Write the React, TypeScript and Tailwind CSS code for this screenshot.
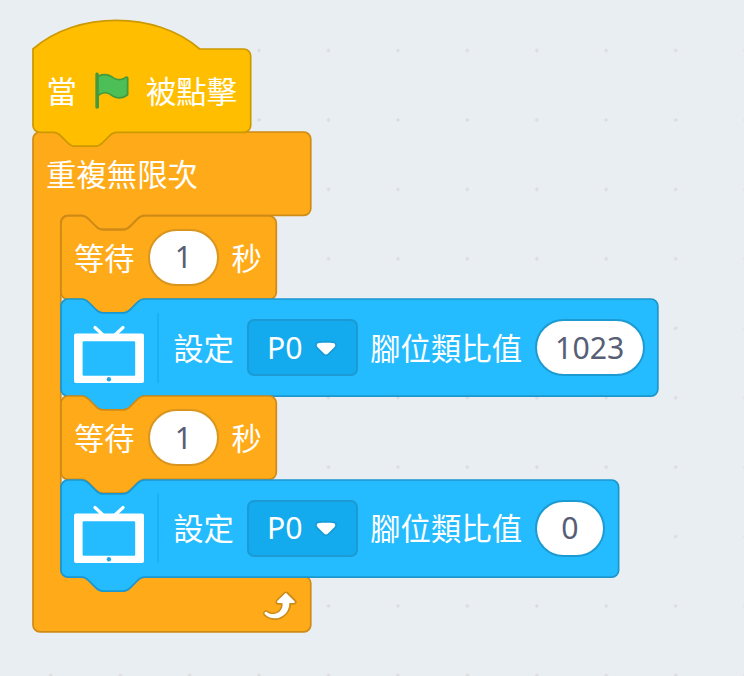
import type { ReactNode } from "react";

// Screen pixels per block unit
const S = 1.736;

const NOTCH_R = "c2,0 3,1 4,2 l4,4 c1,1 2,2 4,2 h12 c2,0 3,-1 4,-2 l4,-4 c1,-1 2,-2 4,-2";
const NOTCH_L = "c-2,0 -3,1 -4,2 l-4,4 c-1,1 -2,2 -4,2 h-12 c-2,0 -3,-1 -4,-2 l-4,-4 c-1,-1 -2,-2 -4,-2";

const hatPath = (w: number) =>
  `M0,0 c25,-22 71,-22 96,0 H${w - 4} a4,4 0 0 1 4,4 V44 a4,4 0 0 1 -4,4 H48 ${NOTCH_L} H4 a4,4 0 0 1 -4,-4 z`;

const stackPath = (w: number, h: number) =>
  `M0,4 A4,4 0 0 1 4,0 H12 ${NOTCH_R} H${w - 4} a4,4 0 0 1 4,4 V${h - 4} a4,4 0 0 1 -4,4 H48 ${NOTCH_L} H4 a4,4 0 0 1 -4,-4 z`;

const loopPath = (w: number, inner: number) =>
  `M0,4 A4,4 0 0 1 4,0 H12 ${NOTCH_R} H${w - 4} a4,4 0 0 1 4,4 V44 a4,4 0 0 1 -4,4 H64 ${NOTCH_L} h-8 a4,4 0 0 0 -4,4 v${inner - 8} a4,4 0 0 0 4,4 h8 ${NOTCH_R} H${w - 4} a4,4 0 0 1 4,4 v24 a4,4 0 0 1 -4,4 H4 a4,4 0 0 1 -4,-4 z`;

function Shape({ d, className }: { d: string; className: string }) {
  return (
    <svg className={`absolute left-0 top-0 overflow-visible ${className}`} width="10" height="10">
      <path d={d} transform={`scale(${S})`} />
    </svg>
  );
}

function Label({ children, className = "" }: { children: ReactNode; className?: string }) {
  return (
    <span className={`relative shrink-0 whitespace-nowrap pt-[3px] text-[30.35px] text-white ${className}`}>
      {children}
    </span>
  );
}

function NumberField({ value, className }: { value: string; className: string }) {
  return (
    <span
      className={`relative flex h-[57px] shrink-0 items-center justify-center rounded-full border-2 bg-white text-[#575e75] ${className}`}
    >
      {value}
    </span>
  );
}

function Flag() {
  return (
    <svg className="relative ml-[14.4px] size-[41.7px] shrink-0" viewBox="0 0 24 24">
      <path
        fill="#45993D"
        d="M20.8 3.7c-.4-.2-.9-.1-1.2.2-2 1.6-4.8 1.6-6.8 0-2.3-1.9-5.6-2.3-8.3-1v-.4c0-.6-.5-1-1-1s-1 .4-1 1v18.8c0 .5.5 1 1 1h.1c.5 0 1-.5 1-1v-6.4c1-.7 2.1-1.2 3.4-1.3 1.2 0 2.4.4 3.4 1.2 2.9 2.3 7 2.3 9.8 0 .3-.2.4-.5.4-.9V4.7c0-.5-.3-.9-.8-1z"
      />
      <path
        fill="#4CBF56"
        d="M20.6 4.8l-.1 9.1v.1c-2.5 2-6.1 2-8.6 0-1.1-.9-2.5-1.4-4-1.4-1.2.1-2.3.5-3.4 1.1V4c2.5-1.4 5.5-1.1 7.7.6 2.4 1.9 5.7 1.9 8.1 0h.2c0 .1.1.1.1.2z"
      />
    </svg>
  );
}

function BoardIcon() {
  return (
    <svg className="relative ml-[13.2px] mt-[14px] h-[60px] w-[70.5px] shrink-0" viewBox="0 0 70.5 60">
      <path d="M21 2.500l7.500 7M49 2.500l-7.500 7" stroke="#fff" strokeWidth="3.2" strokeLinecap="round" />
      <path
        fill="#fff"
        fillRule="evenodd"
        d="M2 8.500H68a2 2 0 0 1 2 2V56a2 2 0 0 1 -2 2H2a2 2 0 0 1 -2 -2V10.500a2 2 0 0 1 2 -2zM9.600 16.300a1 1 0 0 0 -1 1V49.700a1 1 0 0 0 1 1H60.200a1 1 0 0 0 1 -1V17.300a1 1 0 0 0 -1 -1z"
      />
      <circle cx="34.900" cy="54.200" r="2.200" fill="#24a8e4" />
    </svg>
  );
}

function Caret() {
  return (
    <svg className="ml-[12.2px] mt-[3px] h-[16.500px] w-[22px] shrink-0" viewBox="0 0 12.71 9.500">
      <path
        fill="#231f20"
        opacity="0.1"
        d="M12.71,2.44A2.41,2.41,0,0,1,12,4.16L8.08,8.08a2.45,2.45,0,0,1-3.45,0L0.72,4.16A2.42,2.42,0,0,1,0,2.44,2.48,2.48,0,0,1,.71.71C1,0.47,1.43,0,6.36,0S11.75,0.46,12,.71A2.44,2.44,0,0,1,12.71,2.44Z"
      />
      <path
        fill="#fff"
        d="M6.36,7.79a1.43,1.43,0,0,1-1-.42L1.42,3.45a1.44,1.44,0,0,1,0-2c0.56-.56,9.31-0.56,9.87,0a1.44,1.44,0,0,1,0,2L7.37,7.37A1.43,1.43,0,0,1,6.36,7.79Z"
      />
    </svg>
  );
}

function LoopArrow() {
  return (
    <svg className="relative ml-[222.6px] size-[41.7px]" viewBox="0 0 24 24">
      <path
        fill="#CF8B17"
        d="M23.3,11c-0.3,0.6-0.9,1-1.5,1h-1.6c-0.1,1.3-0.5,2.5-1.1,3.6c-0.9,1.7-2.3,3.2-4.1,4.1c-1.7,0.9-3.6,1.2-5.5,0.9c-1.8-0.3-3.5-1.1-4.9-2.3c-0.7-0.7-0.7-1.9,0-2.6c0.6-0.6,1.6-0.7,2.3-0.2H7c0.9,0.6,1.9,0.9,2.9,0.9s1.9-0.3,2.7-0.9c1.1-0.8,1.8-2.1,1.8-3.5h-1.5c-0.9,0-1.7-0.7-1.7-1.7c0-0.4,0.2-0.9,0.5-1.2l4.4-4.4c0.7-0.6,1.7-0.6,2.4,0L23,9.2C23.5,9.7,23.6,10.4,23.3,11z"
      />
      <path
        fill="#fff"
        d="M21.8,11h-2.6c0,1.5-0.3,2.9-1,4.2c-0.8,1.6-2.1,2.8-3.7,3.6c-1.5,0.8-3.3,1.1-4.9,0.8c-1.6-0.2-3.2-1-4.4-2.1c-0.4-0.3-0.4-0.9-0.1-1.2c0.3-0.4,0.9-0.4,1.2-0.1l0,0c1,0.7,2.2,1.1,3.4,1.1s2.3-0.3,3.3-1c0.9-0.6,1.6-1.5,2-2.6c0.3-0.9,0.4-1.8,0.2-2.8h-2.4c-0.4,0-0.7-0.3-0.7-0.7c0-0.2,0.1-0.3,0.2-0.4l4.4-4.4c0.3-0.3,0.7-0.3,0.9,0L22,9.8c0.3,0.3,0.4,0.6,0.3,0.9S22,11,21.8,11z"
      />
    </svg>
  );
}

const CONTROL = "fill-[#ffab19] stroke-[#cf8b17]";

function WaitBlock() {
  return (
    <div className="relative flex h-[83.3px] items-center">
      <Shape d={stackPath(124, 48)} className={CONTROL} />
      <Label className="ml-[13px] w-[60.5px]">等待</Label>
      <NumberField value="1" className="ml-[13.500px] w-[71px] border-[#d9951d]" />
      <Label className="ml-[12.500px]">秒</Label>
    </div>
  );
}

function PinBlock({ value, width, fieldClass }: { value: string; width: number; fieldClass: string }) {
  return (
    <div className="relative flex h-[97.2px] items-center">
      <Shape d={stackPath(width, 56)} className="fill-[#24bcff] stroke-[#1c97cd]" />
      <BoardIcon />
      <span className="relative ml-[12.5px] h-[70px] w-[2px] shrink-0 bg-[#1db0f1]" />
      <Label className="ml-[14.2px] w-[60.5px]">設定</Label>
      <span className="relative ml-[13.500px] flex h-[57px] w-[110.5px] shrink-0 items-center rounded-[7px] border-2 border-[#1b9ad3] bg-[#14abee] pl-[17.8px] text-white">
        P0
        <Caret />
      </span>
      <Label className="ml-[12.500px] w-[151px]">腳位類比值</Label>
      <NumberField value={value} className={`ml-[13.4px] border-[#1c9ad2] ${fieldClass}`} />
    </div>
  );
}

export default function App() {
  return (
    <main className="h-[676px] w-[744px] overflow-hidden bg-[#e9eef2] bg-[radial-gradient(circle_at_50%_50%,#dcdcde_1.3px,transparent_2.1px)] bg-[length:69.44px_69.44px] bg-[position:16px_15.800px] pl-[33.1px] pt-[49.2px] font-['Noto_Sans','Noto_Sans_CJK_TC',sans-serif] text-[30.2px] leading-none">
      <section className="relative z-10 flex h-[83.3px] items-center">
        <Shape d={hatPath(125.4)} className="fill-[#ffbf00] stroke-[#cc9900]" />
        <Label className="ml-[13.4px] w-[30.2px]">當</Label>
        <Flag />
        <Label className="ml-[13.2px]">被點擊</Label>
      </section>
      <section className="relative">
        <Shape d={loopPath(160, 208)} className={CONTROL} />
        <div className="flex h-[83.3px] items-center">
          <Label className="ml-[13px]">重複無限次</Label>
        </div>
        <div className="flex flex-col pl-[27.8px]">
          <WaitBlock />
          <PinBlock value="1023" width={343.8} fieldClass="w-[110px]" />
          <WaitBlock />
          <PinBlock value="0" width={321.2} fieldClass="w-[70.5px]" />
        </div>
        <div className="flex h-[55.6px] items-center">
          <LoopArrow />
        </div>
      </section>
    </main>
  );
}
